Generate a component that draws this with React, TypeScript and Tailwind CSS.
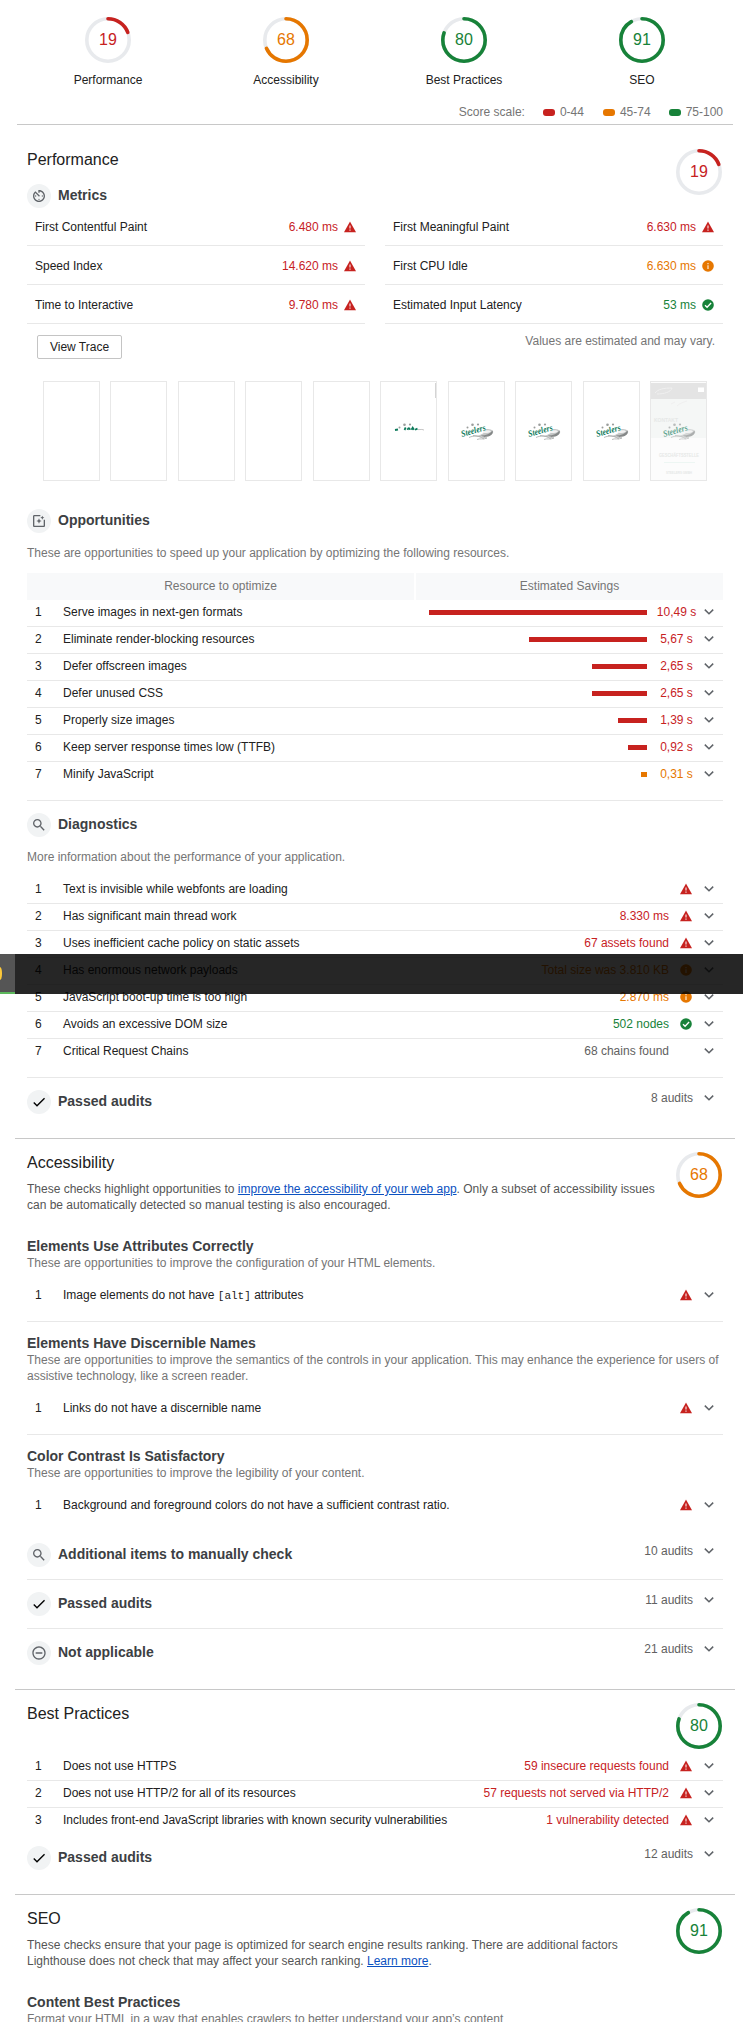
import React from "react";

const RED = "#c7221f";
const ORANGE = "#e67700";
const GREEN = "#178239";

type Level = "fail" | "average" | "pass";
const textColor: Record<Level, string> = {
  fail: "text-[#c7221f]",
  average: "text-[#e67700]",
  pass: "text-[#178239]",
};

function Gauge({ score }: { score: number }) {
  const color = score < 45 ? RED : score < 75 ? ORANGE : GREEN;
  const r = 21.2;
  const c = 2 * Math.PI * r;
  return (
    <div className="grid size-[46px] shrink-0 place-items-center">
      <svg viewBox="0 0 46 46" className="col-start-1 row-start-1 size-[46px]" fill="none">
        <circle cx="23" cy="23" r={r} stroke="#e8eaed" strokeWidth="3.6" />
        <circle
          cx="23"
          cy="23"
          r={r}
          stroke={color}
          strokeWidth="3.6"
          strokeLinecap="round"
          strokeDasharray={`${(c * score) / 100} ${c}`}
          transform="rotate(-90 23 23)"
        />
      </svg>
      <span
        className={`col-start-1 row-start-1 text-[16px] leading-[18px] ${
          score < 45 ? textColor.fail : score < 75 ? textColor.average : textColor.pass
        }`}
      >
        {score}
      </span>
    </div>
  );
}

function StatusIcon({ level }: { level: Level }) {
  return (
    <svg viewBox="0 0 12 12" className="size-3 shrink-0">
      {level === "fail" && (
        <>
          <path d="M6 .4 12 11.200H0z" fill={RED} />
          <path d="M5.400 4.600h1.200v3H5.400zM5.400 8.600h1.200v1.200H5.400z" fill="#fff" opacity=".85" />
        </>
      )}
      {level === "average" && (
        <>
          <circle cx="6" cy="6" r="5.800" fill={ORANGE} />
          <path d="M5.400 3h1.200v1.200H5.400zM5.400 5.200h1.200v3.800H5.400z" fill="#fff" opacity=".85" />
        </>
      )}
      {level === "pass" && (
        <>
          <circle cx="6" cy="6" r="5.800" fill={GREEN} />
          <path d="m3 6.200 2.100 2.100 4-4.300" fill="none" stroke="#fff" strokeWidth="1.300" />
        </>
      )}
    </svg>
  );
}

function Chevron() {
  return (
    <svg viewBox="0 0 10 6" className="h-1.5 w-2.5 shrink-0" fill="none" stroke="#5f6368" strokeWidth="1.5">
      <path d="m.8.6 4.200 4.200L9.200.6" />
    </svg>
  );
}

type IconName = "metrics" | "opportunity" | "search" | "check" | "minus";
function RoundIcon({ name }: { name: IconName }) {
  return (
    <div className="flex size-6 shrink-0 items-center justify-center rounded-full bg-[#f1f3f4]">
      <svg viewBox="0 0 24 24" className="size-4" fill="#5f6368">
        {name === "metrics" && (
          <path d="M11 17c0 .55.45 1 1 1s1-.45 1-1-.45-1-1-1-1 .45-1 1zm0-14v4h2V5.08c3.39.49 6 3.39 6 6.92 0 3.87-3.13 7-7 7s-7-3.13-7-7c0-1.68.59-3.22 1.58-4.42L12 13l1.41-1.41-6.8-6.8v.02C4.42 6.45 3 9.05 3 12c0 4.97 4.02 9 9 9 4.97 0 9-4.03 9-9s-4.03-9-9-9h-1zm7 9c0-.55-.45-1-1-1s-1 .45-1 1 .45 1 1 1 1-.45 1-1zM6 12c0 .55.45 1 1 1s1-.45 1-1-.45-1-1-1-1 .45-1 1z" />
        )}
        {name === "opportunity" && (
          <path d="M19.02 10v9H5V5h9V3H5.02c-1.1 0-2 .9-2 2v14c0 1.1.9 2 2 2H19c1.1 0 2-.9 2-2v-9h-1.98zM17 10l.94-2.06L20 7l-2.06-.94L17 4l-.94 2.06L14 7l2.06.94zm-3.75.75L12 8l-1.25 2.75L8 12l2.75 1.25L12 16l1.25-2.75L16 12z" />
        )}
        {name === "search" && (
          <path d="M15.5 14h-.79l-.28-.27C15.41 12.59 16 11.11 16 9.5 16 5.91 13.09 3 9.5 3S3 5.91 3 9.5 5.91 16 9.5 16c1.61 0 3.09-.59 4.23-1.57l.27.28v.79l5 4.99L20.49 19l-4.99-5zm-6 0C7.01 14 5 11.99 5 9.5S7.01 5 9.5 5 14 7.01 14 9.5 11.99 14 9.5 14z" />
        )}
        {name === "check" && (
          <path d="M9 16.17 4.83 12l-1.42 1.41L9 19 21 7l-1.41-1.41z" fill="#000" />
        )}
        {name === "minus" && (
          <path d="M7 11v2h10v-2H7zm5-9C6.48 2 2 6.48 2 12s4.48 10 10 10 10-4.48 10-10S17.52 2 12 2zm0 18c-4.41 0-8-3.59-8-8s3.59-8 8-8 8 3.59 8 8-3.59 8-8 8z" />
        )}
      </svg>
    </div>
  );
}

function Heading({ icon, children }: { icon: IconName; children: React.ReactNode }) {
  return (
    <div className="flex h-6 items-center gap-[7px]">
      <RoundIcon name={icon} />
      <h2 className="-mt-0.5 text-[14px] leading-5 font-bold text-[#3c4043]">{children}</h2>
    </div>
  );
}

function Clump({ icon, title, count }: { icon: IconName; title: string; count: string }) {
  return (
    <div className="flex h-6 items-start justify-between pr-[9px]">
      <Heading icon={icon}>{title}</Heading>
      <div className="flex h-4 items-center gap-[11px] text-[#616161]">
        {count}
        <Chevron />
      </div>
    </div>
  );
}

function Metric({ name, value, level }: { name: string; value: string; level: Level }) {
  return (
    <div className="flex h-[39px] items-center border-b border-[#e8e8e8] pt-0.5 pr-[9px] pl-2">
      <span className="flex-1">{name}</span>
      <span className={`mr-1.5 ${textColor[level]}`}>{value}</span>
      <StatusIcon level={level} />
    </div>
  );
}

function Audit({
  n,
  title,
  value,
  level,
  last,
}: {
  n: number;
  title: React.ReactNode;
  value?: string;
  level?: Level;
  last?: boolean;
}) {
  return (
    <div
      className={`flex h-[27px] items-center border-b pr-[9px] pl-2 pb-0.5 ${
        last ? "border-transparent" : "border-[#e8e8e8]"
      }`}
    >
      <span className="w-7">{n}</span>
      <span className="flex-1">{title}</span>
      <span className={`mr-[11px] ${level ? textColor[level] : "text-[#616161]"}`}>{value}</span>
      <span className="mr-3 w-3">{level && <StatusIcon level={level} />}</span>
      <Chevron />
    </div>
  );
}

const opportunities: { title: string; value: string; bar: number; level: Level }[] = [
  { title: "Serve images in next-gen formats", value: "10,49 s", bar: 218, level: "fail" },
  { title: "Eliminate render-blocking resources", value: "5,67 s", bar: 118, level: "fail" },
  { title: "Defer offscreen images", value: "2,65 s", bar: 55, level: "fail" },
  { title: "Defer unused CSS", value: "2,65 s", bar: 55, level: "fail" },
  { title: "Properly size images", value: "1,39 s", bar: 29, level: "fail" },
  { title: "Keep server response times low (TTFB)", value: "0,92 s", bar: 19, level: "fail" },
  { title: "Minify JavaScript", value: "0,31 s", bar: 6, level: "average" },
];

function Logo({ partial }: { partial?: boolean }) {
  return (
    <>
      <g fill="#9a9d9c">
        <circle cx="18.500" cy="45.500" r="1" />
        <circle cx="23.500" cy="42.800" r="1.300" />
        <circle cx="29" cy="42.500" r="1.100" />
      </g>
      {partial ? (
        <g fill="none" stroke="#0d7a5b" strokeWidth="1.800">
          <path d="m14 48 3-.5M23.500 48l1.200-2.500M26.500 47.800c1-2.500 2-2 2.500 0M30.500 47.800l1.200-2 1.200 2M34 47.800l2.500-1.200" />
          <path d="M37 47.600c3 0 5-.5 6 .6" stroke="#aaa" strokeWidth=".7" />
        </g>
      ) : (
        <>
          <path d="M28 54c6 1 14 0 16-3 1.400-3-3-4.300-8-4 3 1.500 1 4-8 7z" fill="#c4c6c6" />
          <path d="M32 53.500c5 0 9-1.500 11.500-5 1 3-1 5.500-6 6.300-2.500.3-4 0-5.500-1.300z" fill="#858888" />
          <path d="M20 55.500c5-2.500 10-1 18 .5-4 2-7 0-10 1.500M24 53.500c4 0 7 1 11 3.500" fill="none" stroke="#a8abab" strokeWidth=".8" />
          <path d="M34 49.300c3-1.300 7-1.300 8 .2-2 1.500-4.500 1.800-8 1.500z" fill="#f2f2f2" />
          <text
            x="13"
            y="55"
            transform="rotate(-16 13 55)"
            textLength="25"
            lengthAdjust="spacingAndGlyphs"
            className="font-['Liberation_Serif',serif] text-[9px] font-bold italic"
            fill="#0d7a5b"
          >
            Steelers
          </text>
        </>
      )}
    </>
  );
}

function Frame({ index }: { index: number }) {
  return (
    <div className="h-[100px] w-[57px] overflow-hidden border border-[#e8e8e8]">
      <svg viewBox="0 0 55 98" className="h-[98px] w-[55px]">
        {index === 9 && (
          <>
            <rect width="55" height="98" fill="#fcfcfc" />
            <rect y="1" width="55" height="16" fill="#e4e4e4" />
            <rect y="17" width="55" height="39" fill="#f5f7f6" />
            <rect x="47" y="5.500" width="6" height="4.500" fill="#fff" />
            <path d="M4 11c3-4 9-5 17-5-1 4-8 6-15 6M20 22l4-2M26 24c3-3 7-4 10-5" stroke="#f0f0f0" fill="none" />
            <g className="font-['Liberation_Sans',sans-serif] font-bold" fill="#e6e8e7">
              <text x="3" y="40" fontSize="5" textLength="24">KONTAKT</text>
              <text x="8" y="75" fontSize="4.500" textLength="40" lengthAdjust="spacingAndGlyphs">GESCHÄFTSSTELLE</text>
              <text x="15" y="92" fontSize="3.500" textLength="26" lengthAdjust="spacingAndGlyphs">STEELERS GMBH</text>
            </g>
            <path d="M13 80.500h31" stroke="#edf6f3" />
          </>
        )}
        {index >= 5 && (
          <g opacity={index === 9 ? 0.65 : 1}>
            <Logo partial={index === 5} />
          </g>
        )}
        {index === 5 && <path d="M54.500 1v15" stroke="#d4d4d4" />}
      </svg>
    </div>
  );
}

function SectionTitle({ title, score, children }: { title: string; score: number; children?: React.ReactNode }) {
  return (
    <div className="flex items-start justify-between pr-px">
      <div className="pt-px">
        <h1 className="text-[16px] leading-5 text-[#212121]">{title}</h1>
        {children}
      </div>
      <Gauge score={score} />
    </div>
  );
}

function Group({ title, children }: { title: string; children: React.ReactNode }) {
  return (
    <div>
      <h2 className="text-[14px] leading-[18px] font-bold text-[#3c4043]">{title}</h2>
      <p className="text-[#757575]">{children}</p>
    </div>
  );
}

const line = "border-[#e8e8e8]";

export default function App() {
  return (
    <div className="relative h-[2022px] w-[743px] overflow-hidden bg-white font-['Liberation_Sans',Arial,sans-serif] text-[12px] leading-4 text-[#212121]">
      <header className="mr-[10px] ml-[17px] h-[125px] border-b border-[#c8c8c8] pt-[17px]">
        <div className="mr-0.5 ml-0.5 grid grid-cols-4">
          {[
            ["Performance", 19],
            ["Accessibility", 68],
            ["Best Practices", 80],
            ["SEO", 91],
          ].map(([name, score]) => (
            <div key={name} className="flex flex-col items-center gap-[9px]">
              <Gauge score={score as number} />
              <span>{name}</span>
            </div>
          ))}
        </div>
        <div className="mt-4 mr-[10px] flex items-center justify-end text-[#757575]">
          <span>Score scale:</span>
          <span className="mr-[5px] ml-[18px] h-[7px] w-3 rounded-[3px] bg-[#c7221f]" />
          0-44
          <span className="mr-[5px] ml-[19px] h-[7px] w-3 rounded-[3px] bg-[#e67700]" />
          45-74
          <span className="mr-[5px] ml-[18px] h-[7px] w-3 rounded-[3px] bg-[#178239]" />
          75-100
        </div>
      </header>

      <section className="mr-2 ml-[15px] h-[1014px] border-b border-[#c8c8c8] pr-3 pl-3">
        <div className="flex h-[59px] items-start justify-between pt-6 pr-px">
          <h1 className="mt-px text-[16px] leading-5">Performance</h1>
          <Gauge score={19} />
        </div>
        <Heading icon="metrics">Metrics</Heading>
        <div className="-mt-px grid grid-cols-2 gap-x-5">
          <Metric name="First Contentful Paint" value="6.480 ms" level="fail" />
          <Metric name="First Meaningful Paint" value="6.630 ms" level="fail" />
          <Metric name="Speed Index" value="14.620 ms" level="fail" />
          <Metric name="First CPU Idle" value="6.630 ms" level="average" />
          <Metric name="Time to Interactive" value="9.780 ms" level="fail" />
          <Metric name="Estimated Input Latency" value="53 ms" level="pass" />
        </div>
        <div className="mt-px flex items-start justify-between pt-[10px] pr-2 pl-[10px]">
          <button className="h-6 w-[85px] rounded-xs border border-[#c4c4c4] bg-white text-center">View Trace</button>
          <span className="-mt-0.5 text-[#757575]">Values are estimated and may vary.</span>
        </div>
        <div className="mt-[22px] flex justify-between pr-4 pl-4">
          {Array.from({ length: 10 }, (_, i) => (
            <Frame key={i} index={i} />
          ))}
        </div>

        <div className="mt-7">
          <Heading icon="opportunity">Opportunities</Heading>
        </div>
        <p className="mt-3 text-[#757575]">
          These are opportunities to speed up your application by optimizing the following resources.
        </p>
        <div className="mt-3 grid h-[27px] grid-cols-[387px_1fr] gap-0.5 text-center leading-[26px] text-[#757575]">
          <div className="bg-[#f8f9fa]">Resource to optimize</div>
          <div className="bg-[#f8f9fa]">Estimated Savings</div>
        </div>
        {opportunities.map((o, i) => (
          <div
            key={o.title}
            className={`flex h-[27px] items-center border-b pr-[9px] pb-0.5 pl-2 ${
              i === 6 ? "border-transparent" : line
            }`}
          >
            <span className="w-7">{i + 1}</span>
            <span className="flex-1">{o.title}</span>
            <span
              className={`h-[5px] ${o.level === "fail" ? "bg-[#c7221f]" : "bg-[#e67700]"}`}
              style={{ width: o.bar }}
            />
            <span className={`w-[57px] pl-0.5 text-center ${textColor[o.level]}`}>{o.value}</span>
            <Chevron />
          </div>
        ))}

        <div className={`mt-[11px] border-t pt-3 ${line}`}>
          <Heading icon="search">Diagnostics</Heading>
        </div>
        <p className="mt-3 mb-3 text-[#757575]">More information about the performance of your application.</p>
        <Audit n={1} title="Text is invisible while webfonts are loading" level="fail" />
        <Audit n={2} title="Has significant main thread work" value="8.330 ms" level="fail" />
        <Audit n={3} title="Uses inefficient cache policy on static assets" value="67 assets found" level="fail" />
        <Audit n={4} title="Has enormous network payloads" value="Total size was 3.810 KB" level="average" />
        <Audit n={5} title="JavaScript boot-up time is too high" value="2.870 ms" level="average" />
        <Audit n={6} title="Avoids an excessive DOM size" value="502 nodes" level="pass" />
        <Audit n={7} title="Critical Request Chains" value="68 chains found" last />
        <div className={`mt-[11px] border-t pt-3 ${line}`}>
          <Clump icon="check" title="Passed audits" count="8 audits" />
        </div>
      </section>

      <section className="mr-2 ml-[15px] h-[551px] border-b border-[#c8c8c8] px-3 pt-[13px]">
        <SectionTitle title="Accessibility" score={68}>
          <p className="mt-2 w-[640px] text-[#555]">
            These checks highlight opportunities to{" "}
            <a className="text-[#0b51c1] underline">improve the accessibility of your web app</a>. Only a subset of
            accessibility issues
            <br />
            can be automatically detected so manual testing is also encouraged.
          </p>
        </SectionTitle>
        <div className={`mt-6 h-[85px] border-b ${line}`}>
          <Group title="Elements Use Attributes Correctly">
            These are opportunities to improve the configuration of your HTML elements.
          </Group>
          <div className="pt-3">
            <Audit
              n={1}
              title={
                <>
                  Image elements do not have{" "}
                  <code className="font-['Liberation_Mono',monospace] text-[11px]">[alt]</code> attributes
                </>
              }
              level="fail"
              last
            />
          </div>
        </div>
        <div className={`h-[113px] border-b pt-3 ${line}`}>
          <Group title="Elements Have Discernible Names">
            These are opportunities to improve the semantics of the controls in your application. This may enhance the
            experience for users of assistive technology, like a screen reader.
          </Group>
          <div className="pt-3">
            <Audit n={1} title="Links do not have a discernible name" level="fail" last />
          </div>
        </div>
        <div className="h-[108px] pt-3">
          <Group title="Color Contrast Is Satisfactory">
            These are opportunities to improve the legibility of your content.
          </Group>
          <div className="pt-3">
            <Audit n={1} title="Background and foreground colors do not have a sufficient contrast ratio." level="fail" last />
          </div>
        </div>
        <div className={`h-[37px] border-b ${line}`}>
          <Clump icon="search" title="Additional items to manually check" count="10 audits" />
        </div>
        <div className={`h-[49px] border-b pt-3 ${line}`}>
          <Clump icon="check" title="Passed audits" count="11 audits" />
        </div>
        <div className="pt-3">
          <Clump icon="minus" title="Not applicable" count="21 audits" />
        </div>
      </section>

      <section className="mr-2 ml-[15px] h-[205px] border-b border-[#c8c8c8] px-3 pt-[13px]">
        <SectionTitle title="Best Practices" score={80} />
        <div className="pt-[5px]">
          <Audit n={1} title="Does not use HTTPS" value="59 insecure requests found" level="fail" />
          <Audit n={2} title="Does not use HTTP/2 for all of its resources" value="57 requests not served via HTTP/2" level="fail" />
          <Audit
            n={3}
            title="Includes front-end JavaScript libraries with known security vulnerabilities"
            value="1 vulnerability detected"
            level="fail"
            last
          />
        </div>
        <div className="pt-[11px]">
          <Clump icon="check" title="Passed audits" count="12 audits" />
        </div>
      </section>

      <section className="mr-2 ml-[15px] px-3 pt-[13px]">
        <SectionTitle title="SEO" score={91}>
          <p className="mt-2 w-[640px] text-[#555]">
            These checks ensure that your page is optimized for search engine results ranking. There are additional
            factors
            <br />
            Lighthouse does not check that may affect your search ranking.{" "}
            <a className="text-[#0b51c1] underline">Learn more</a>.
          </p>
        </SectionTitle>
        <div className="mt-6">
          <Group title="Content Best Practices">
            Format your HTML in a way that enables crawlers to better understand your app’s content
          </Group>
        </div>
      </section>

      <div className="absolute top-[954px] left-0 flex h-10 w-full bg-black/85">
        <div className="flex w-[15px] items-center border-b-2 border-[#5cb85c] bg-[#555]">
          <span className="h-[13px] w-0.5 rounded-r-[2px_6px] bg-[#fdc93a]" />
        </div>
      </div>
    </div>
  );
}
